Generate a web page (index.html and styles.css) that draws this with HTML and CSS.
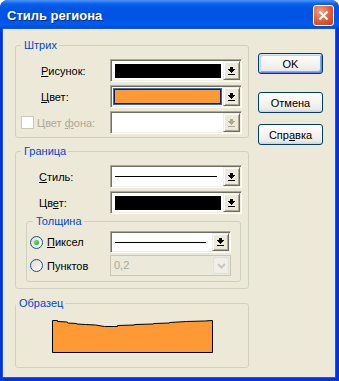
FILE: index.html
```html
<!DOCTYPE html>
<html>
<head>
<meta charset="UTF-8">
<title>Стиль региона</title>
<link rel="stylesheet" href="styles.css">
</head>
<body>
<svg class="defs" width="0" height="0">
  <symbol id="arr" viewBox="0 0 7 8">
    <rect x="2" y="0" width="3" height="2"/>
    <rect x="0" y="2" width="7" height="1"/>
    <rect x="1" y="3" width="5" height="1"/>
    <rect x="2" y="4" width="3" height="1"/>
    <rect x="3" y="5" width="1" height="1"/>
    <rect x="0" y="7" width="7" height="1"/>
  </symbol>
  <symbol id="chev" viewBox="0 0 9 6">
    <path d="M1 1l3.5 3.5L8 1" fill="none" stroke="currentColor" stroke-width="2"/>
  </symbol>
</svg>

<div class="window">
  <div class="titlebar">
    <span class="title">Стиль региона</span>
    <span class="close">
      <svg width="11" height="11" viewBox="0 0 11 11"><path d="M1.5 1.5L9.5 9.5M9.5 1.5L1.5 9.5" stroke="#fff" stroke-width="2.2"/></svg>
    </span>
  </div>

  <div class="client">
    <div class="groups">

      <fieldset class="group">
        <legend>Штрих</legend>
        <div class="rows">
          <div class="row">
            <span class="lbl"><u>Р</u>исунок:</span>
            <div class="combo">
              <div class="field"><span class="swatch black"></span></div>
              <span class="drop"><svg class="arr" width="7" height="8"><use href="#arr"/></svg></span>
            </div>
          </div>
          <div class="row">
            <span class="lbl"><u>Ц</u>вет:</span>
            <div class="combo">
              <div class="field"><span class="swatch orange focus"></span></div>
              <span class="drop"><svg class="arr" width="7" height="8"><use href="#arr"/></svg></span>
            </div>
          </div>
          <div class="row">
            <span class="lbl check-lbl"><span class="check"></span><span>Цвет <u>ф</u>она:</span></span>
            <div class="combo">
              <div class="field"></div>
              <span class="drop off"><svg class="arr" width="7" height="8"><use href="#arr"/></svg></span>
            </div>
          </div>
        </div>
      </fieldset>

      <fieldset class="group border-group">
        <legend>Граница</legend>
        <div class="rows">
          <div class="row">
            <span class="lbl"><u>С</u>тиль:</span>
            <div class="combo">
              <div class="field"><span class="line"></span></div>
              <span class="drop"><svg class="arr" width="7" height="8"><use href="#arr"/></svg></span>
            </div>
          </div>
          <div class="row">
            <span class="lbl">Цв<u>е</u>т:</span>
            <div class="combo">
              <div class="field"><span class="swatch black"></span></div>
              <span class="drop"><svg class="arr" width="7" height="8"><use href="#arr"/></svg></span>
            </div>
          </div>
        </div>

        <fieldset class="group thick">
          <legend>Толщина</legend>
          <div class="radio-row">
            <span class="rlbl"><span class="radio on"></span><span><u>П</u>иксел</span></span>
            <div class="combo short">
              <div class="field"><span class="line"></span></div>
              <span class="drop"><svg class="arr" width="7" height="8"><use href="#arr"/></svg></span>
            </div>
          </div>
          <div class="radio-row second">
            <span class="rlbl"><span class="radio"></span><span>Пунктов</span></span>
            <div class="xp-combo">
              <span class="xp-text">0,2</span>
              <span class="xp-drop"><svg width="9" height="6"><use href="#chev"/></svg></span>
            </div>
          </div>
        </fieldset>
      </fieldset>

      <fieldset class="group sample-group">
        <legend>Образец</legend>
        <svg class="sample" width="161" height="33" viewBox="0 0 161 33">
          <polygon points="0.5,0.5 5.5,0.5 5.5,1.5 15.5,2 15.5,3 24.5,3.5 24.5,4 33.5,4.5 43.5,5 52.5,6.5 65.5,6.5 65.5,5.5 82.5,5 82.5,4.5 101.5,4 101.5,3.5 117.5,3 117.5,2.5 134.5,1.5 152.5,1 160.5,0.5 160.5,32.5 0.5,32.5" fill="#ff9933" stroke="#000" stroke-width="1"/>
        </svg>
      </fieldset>

    </div>

    <div class="buttons">
      <button class="btn default">OK</button>
      <button class="btn cancel">Отмена</button>
      <button class="btn help">Спр<u>а</u>вка</button>
    </div>
  </div>
</div>
</body>
</html>
```

FILE: styles.css
```css
* { box-sizing: border-box; }

body {
    margin: 0;
    background: #fff;
    font: 11px "Liberation Sans", Arial, sans-serif;
    color: #000;
}

.defs { position: absolute; width: 0; height: 0; }

u { text-decoration: underline; text-underline-offset: 1px; }

/* window frame */
.window {
    width: 339px; height: 381px;
    display: flex; flex-direction: column;
    background: #0831d9;
    border-radius: 8px 8px 0 0;
    overflow: hidden;
}

.titlebar {
    flex: none;
    height: 29px;
    display: flex; align-items: center; justify-content: space-between;
    padding: 0 5px 0 7px;
    background: linear-gradient(#4d94f5 0, #2a78f2 2px, #0860ea 4px, #0055e5 8px, #0053e2 18px, #005cee 24px, #0052e0 27px, #003cb8 29px);
}

.title {
    color: #fff;
    font: bold 13px "Liberation Sans", Arial, sans-serif;
    text-shadow: 1px 1px #0c2a8a;
    margin-top: 2px;
}

.close {
    width: 21px; height: 21px;
    margin-top: 2px;
    border: 1px solid #fff;
    border-radius: 3px;
    background: radial-gradient(circle at 35% 30%, #f3a088, #e25a32 55%, #c43e19);
    display: flex; align-items: center; justify-content: center;
}

.client {
    flex: 1;
    display: flex;
    margin: 0 4px 4px 3px;
    padding: 10px 0 0 12px;
    background: #ece9d8;
    box-shadow: 0 0 0 1px #1458e8;
}

/* group boxes */
.groups { width: 234px; display: flex; flex-direction: column; }

.group {
    margin: 0;
    min-width: 0;
    border: 1px solid #d0d0bf;
    border-radius: 3px;
    padding: 7px 5px 3px;
}

.group legend {
    color: #0046d5;
    padding: 0 2px 0 3px;
    height: 13px;
    line-height: 13px;
}

.border-group { margin-top: 7px; padding-bottom: 6px; }
.border-group .lbl { padding-left: 18px; }

.sample-group {
    margin-top: 8px;
    padding: 10px 0 14px;
    display: flex; justify-content: center;
}

.sample { display: block; margin: 0 auto; }

/* rows */
.rows { display: flex; flex-direction: column; gap: 3px; }

.row { display: flex; align-items: center; height: 23px; }

.lbl { width: 89px; flex: none; padding-left: 20px; }

.check-lbl {
    display: flex; align-items: center;
    padding-left: 0;
    color: #aca899;
}

.check {
    width: 13px; height: 13px;
    margin-right: 3px;
    border: 1px solid #cac8bb;
    background: #fff;
}

/* classic combo */
.combo {
    display: flex;
    width: 132px; height: 23px;
    padding: 1px;
    border: 1px solid;
    border-color: #aca899 #fff #fff #aca899;
    box-shadow: inset 1px 1px #716f64, inset -1px -1px #f1efe2;
    background: #fff;
}

.combo.short { width: 121px; height: 22px; }

.field {
    flex: 1;
    display: flex; align-items: center;
    padding: 0 2px 0 3px;
}

.swatch { flex: 1; height: 14px; }
.swatch.black { background: #000; }
.swatch.orange { background: #ff9933; }
.swatch.focus {
    height: 15px;
    margin: 0 0 0 -1px;
    border: 1px solid #0a246a;
    outline: 1px solid #316ac5;
}

.line { flex: 1; height: 1px; background: #000; margin-right: 4px; }

.drop {
    width: 17px; flex: none;
    display: flex; align-items: center; justify-content: center;
    background: #ece9d8;
    border: 1px solid;
    border-color: #f1efe2 #716f64 #716f64 #f1efe2;
    box-shadow: inset 1px 1px #fff, inset -1px -1px #aca899;
    color: #000;
}

.drop.off { color: #aca899; }

.arr { display: block; fill: currentColor; shape-rendering: crispEdges; }

/* thickness subgroup */
.thick {
    margin: 1px 0 0 5px;
    width: 215px;
    padding: 3px 9px 5px 3px;
}

.thick legend { margin-left: 3px; }

.radio-row { display: flex; align-items: center; }
.radio-row.second { margin-top: 2px; }

.rlbl {
    width: 80px; flex: none;
    display: flex; align-items: center; gap: 4px;
}

.radio {
    width: 13px; height: 13px;
    border-radius: 50%;
    border: 1px solid #1c5180;
    background: linear-gradient(135deg, #dcd9d0, #fff);
    display: flex; align-items: center; justify-content: center;
}

.radio.on::after {
    content: "";
    width: 5px; height: 5px;
    border-radius: 50%;
    background: radial-gradient(circle at 35% 35%, #6fe36b, #21a121);
}

/* themed, disabled combo */
.xp-combo {
    display: flex;
    width: 121px; height: 21px;
    border: 1px solid #c9c7ba;
    background: #ebe9da;
    padding: 1px;
}

.xp-text { flex: 1; color: #aca899; padding-left: 2px; line-height: 17px; }

.xp-drop {
    width: 16px;
    display: flex; align-items: center; justify-content: center;
    background: #f0efe7;
    border: 1px solid #e2e0d4;
    border-radius: 2px;
    color: #c8c7bf;
}

/* buttons */
.buttons {
    width: 65px;
    margin-left: 9px;
    padding-top: 14px;
    display: flex; flex-direction: column;
}

.btn {
    height: 21px;
    padding: 0;
    font: inherit;
    color: #000;
    border: 1px solid #003c74;
    border-radius: 3px;
    background: linear-gradient(#fff, #f6f5f1 45%, #ecebe6 85%, #d6d0c5);
}

.btn.default {
    box-shadow: inset 1px 1px #cee7ff, inset -1px -1px #6982ee, inset 2px 2px #bcd4f6, inset -2px -2px #89ade4;
}

.btn.cancel { margin-top: 18px; }
.btn.help { margin-top: 11px; }
```
